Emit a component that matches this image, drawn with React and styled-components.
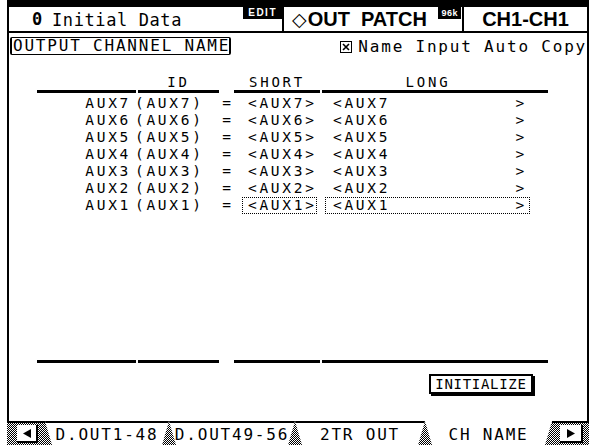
import styled, { createGlobalStyle } from 'styled-components';

const GlobalStyle = createGlobalStyle`
  html, body {
    margin: 0;
    padding: 0;
    background: #fff;
  }
  body {
    width: 593px;
    height: 445px;
    overflow: hidden;
  }
`;

const LCD = `"DejaVu Sans Mono", "Liberation Mono", monospace`;
const BOLD = `"Liberation Sans", Arial, sans-serif`;
const dither = `repeating-conic-gradient(#000 0% 25%, #fff 0% 50%) 0 0 / 2px 2px`;
const cols = `99px 2px 81px 15px 86px 2px 226px`;

const rows = ['AUX7', 'AUX6', 'AUX5', 'AUX4', 'AUX3', 'AUX2', 'AUX1'];
const tabs = ['D.OUT1-48', 'D.OUT49-56', '2TR OUT', 'CH NAME'];
const tabWidths = [124, 126, 130, 127];

const Screen = styled.div`
  margin-left: 7px;
  width: 582px;
  height: 445px;
  box-sizing: border-box;
  border-top: 7px solid #000;
  display: flex;
  flex-direction: column;
  font-family: ${LCD};
  color: #000;
`;

const Header = styled.header`
  height: 26px;
  flex: none;
  display: flex;
  box-sizing: border-box;
  border: 2px solid #000;
  border-top: 0;
`;

const Cell = styled.div`
  display: flex;
  align-items: center;
  box-sizing: border-box;
  width: ${(p) => (p.w ? `${p.w}px` : 'auto')};
  flex: ${(p) => (p.w ? 'none' : '1')};
  border-right: ${(p) => (p.last ? '0' : '2px solid #000')};
  padding-left: ${(p) => p.pad || 0}px;
  justify-content: ${(p) => (p.center ? 'center' : 'flex-start')};
`;

const Zero = styled.span`
  font-weight: bold;
  font-size: 17px;
  width: 20px;
`;

const Title = styled.span`
  font-size: 17px;
  letter-spacing: 0.6px;
  flex: 1;
  padding-top: 1px;
`;

const Badge = styled.span`
  align-self: flex-start;
  background: #000;
  color: #fff;
  font-family: ${BOLD};
  font-weight: bold;
  font-size: ${(p) => p.size}px;
  line-height: 12px;
  height: 12px;
  padding: 0 ${(p) => p.px}px;
  letter-spacing: ${(p) => p.ls}px;
  margin-right: ${(p) => p.mr || 0}px;
`;

const Diamond = styled.span`
  font-family: "DejaVu Sans", sans-serif;
  font-size: 19px;
  margin-right: 1px;
`;

const Big = styled.span`
  font-family: ${BOLD};
  font-weight: bold;
  font-size: 20px;
  flex: ${(p) => (p.grow ? 1 : 'none')};
  white-space: pre;
`;

const Body = styled.main`
  flex: 1;
  display: flex;
  flex-direction: column;
  border-left: 2px solid #000;
  border-right: 2px solid #000;
  padding-top: 4px;
  font-size: 16px;
  letter-spacing: 1.8px;
  line-height: 16px;
`;

const NameRow = styled.div`
  display: flex;
  justify-content: space-between;
  align-items: flex-start;
  height: 18px;
`;

const NameBox = styled.div`
  margin-left: 1px;
  width: 221px;
  height: 18px;
  box-sizing: border-box;
  border: 1px solid #000;
  border-left-width: 2px;
  border-right-width: 2px;
  border-radius: 2px;
  padding: 0 0 0 1px;
  white-space: nowrap;
  overflow: hidden;
`;

const AutoCopy = styled.label`
  display: flex;
  align-items: center;
  gap: 6px;
  margin: 2px 0 0 0;
  white-space: pre;
`;

const Table = styled.section`
  margin: 20px 0 0 28px;
  width: 511px;
  height: 288px;
  display: flex;
  flex-direction: column;
`;

const Grid = styled.div`
  display: grid;
  grid-template-columns: ${cols};
  align-items: center;
  height: ${(p) => p.h}px;
  margin-top: ${(p) => p.mt || 0}px;
  font-size: 14.5px;
  letter-spacing: 2.7px;
  line-height: 15px;
  flex: none;
`;

const HeadLabel = styled.span`
  grid-column: ${(p) => p.col};
  justify-self: center;
  font-size: 14px;
  letter-spacing: 2.8px;
  padding-right: ${(p) => p.pr || 0}px;
`;

const Seg = styled.span`
  grid-column: ${(p) => p.col};
  height: 3px;
  background: #000;
`;

const Label = styled.span`
  grid-column: 1;
  justify-self: end;
  padding-right: 5px;
`;

const Id = styled.span`
  grid-column: 3;
  margin-left: -3px;
`;

const Eq = styled.span`
  grid-column: 4;
  text-align: center;
  letter-spacing: 0;
`;

const Field = styled.span`
  grid-column: ${(p) => p.col};
  display: flex;
  align-items: center;
  justify-content: space-between;
  box-sizing: border-box;
  width: ${(p) => p.w}px;
  height: 17px;
  margin-left: ${(p) => p.ml}px;
  padding: 0 ${(p) => p.pr}px 0 ${(p) => p.pl}px;
  border: 1px dotted ${(p) => (p.focus ? '#000' : 'transparent')};
  white-space: pre;
`;

const Spacer = styled.div`
  flex: 1;
`;

const ButtonRow = styled.div`
  display: flex;
  justify-content: flex-end;
  margin: 11px 54px 0 0;
`;

const Button = styled.button`
  width: 104px;
  height: 20px;
  box-sizing: border-box;
  border: 2px solid #000;
  box-shadow: 2px 2px 0 #000;
  background: #fff;
  font-family: ${LCD};
  font-size: 14px;
  letter-spacing: 0.7px;
  line-height: 14px;
  padding: 0;
  color: #000;
`;

const TabBar = styled.nav`
  height: 24px;
  flex: none;
  display: flex;
  background: ${dither};
`;

const ArrowCell = styled.div`
  box-sizing: border-box;
  width: ${(p) => p.w}px;
  border-top: 2px solid #000;
  padding: 2px ${(p) => p.pr}px 2px ${(p) => p.pl}px;
  display: flex;
`;

const ArrowBox = styled.div`
  flex: 1;
  background: #fff;
  border-bottom: 2px solid #000;
  border-right: 2px solid #000;
  display: flex;
  align-items: center;
  justify-content: center;
`;

const Tab = styled.div`
  box-sizing: border-box;
  flex: none;
  background: #fff;
  border-top: 2px solid ${(p) => (p.active ? '#fff' : '#000')};
  clip-path: polygon(0 0, 100% 0, calc(100% - 7px) 100%, 7px 100%);
  display: flex;
  align-items: center;
  justify-content: center;
  font-size: 16px;
  letter-spacing: 1.8px;
  padding-top: 1px;
  white-space: pre;
`;

const CheckBox = () => (
  <svg width="12" height="12" viewBox="0 0 12 12">
    <rect x="0.5" y="0.5" width="11" height="11" fill="none" stroke="#000" />
    <path d="M3 3 L9 9 M9 3 L3 9" stroke="#000" strokeWidth="1.6" />
  </svg>
);

const Arrow = ({ dir }) => (
  <svg width="8" height="9" viewBox="0 0 8 9">
    <polygon points={dir === 'left' ? '8,0 8,9 0,4.5' : '0,0 0,9 8,4.5'} fill="#000" />
  </svg>
);

const Rule = () => (
  <Grid h={3}>
    <Seg col={1} />
    <Seg col={3} />
    <Seg col={5} />
    <Seg col={7} />
  </Grid>
);

export default function App() {
  return (
    <>
      <GlobalStyle />
      <Screen>
        <Header>
          <Cell w={275} pad={23}>
            <Zero>0</Zero>
            <Title>Initial Data</Title>
            <Badge size={10} px={5} ls={1.5}>EDIT</Badge>
          </Cell>
          <Cell w={180} pad={8}>
            <Diamond>◇</Diamond>
            <Big grow>OUT  PATCH</Big>
            <Badge size={9} px={3} ls={0.5} mr={1}>96k</Badge>
          </Cell>
          <Cell last center>
            <Big>CH1-CH1</Big>
          </Cell>
        </Header>

        <Body>
          <NameRow>
            <NameBox>OUTPUT CHANNEL NAME</NameBox>
            <AutoCopy>
              <CheckBox />
              Name Input Auto Copy
            </AutoCopy>
          </NameRow>

          <Table>
            <Grid h={15}>
              <HeadLabel col={3}>ID</HeadLabel>
              <HeadLabel col={5}>SHORT</HeadLabel>
              <HeadLabel col={7} pr={14}>LONG</HeadLabel>
            </Grid>
            <Rule />
            {rows.map((name, i) => {
              const focus = i === rows.length - 1;
              return (
                <Grid h={17} mt={i === 0 ? 2 : 0} key={name}>
                  <Label>{name}</Label>
                  <Id>({name})</Id>
                  <Eq>=</Eq>
                  <Field col={5} w={75} ml={8} pl={5} pr={0} focus={focus}>
                    {`<${name}>`}
                  </Field>
                  <Field col={7} w={205} ml={3} pl={7} pr={2} focus={focus}>
                    <span>{`<${name}`}</span>
                    <span>&gt;</span>
                  </Field>
                </Grid>
              );
            })}
            <Spacer />
            <Rule />
          </Table>

          <ButtonRow>
            <Button>INITIALIZE</Button>
          </ButtonRow>
        </Body>

        <TabBar>
          <ArrowCell w={38} pl={10} pr={7}>
            <ArrowBox>
              <Arrow dir="left" />
            </ArrowBox>
          </ArrowCell>
          {tabs.map((t, i) => (
            <Tab key={t} active={i === 3} style={{ width: tabWidths[i] }}>
              {t}
            </Tab>
          ))}
          <ArrowCell w={37} pl={8} pr={6}>
            <ArrowBox>
              <Arrow dir="right" />
            </ArrowBox>
          </ArrowCell>
        </TabBar>
      </Screen>
    </>
  );
}
